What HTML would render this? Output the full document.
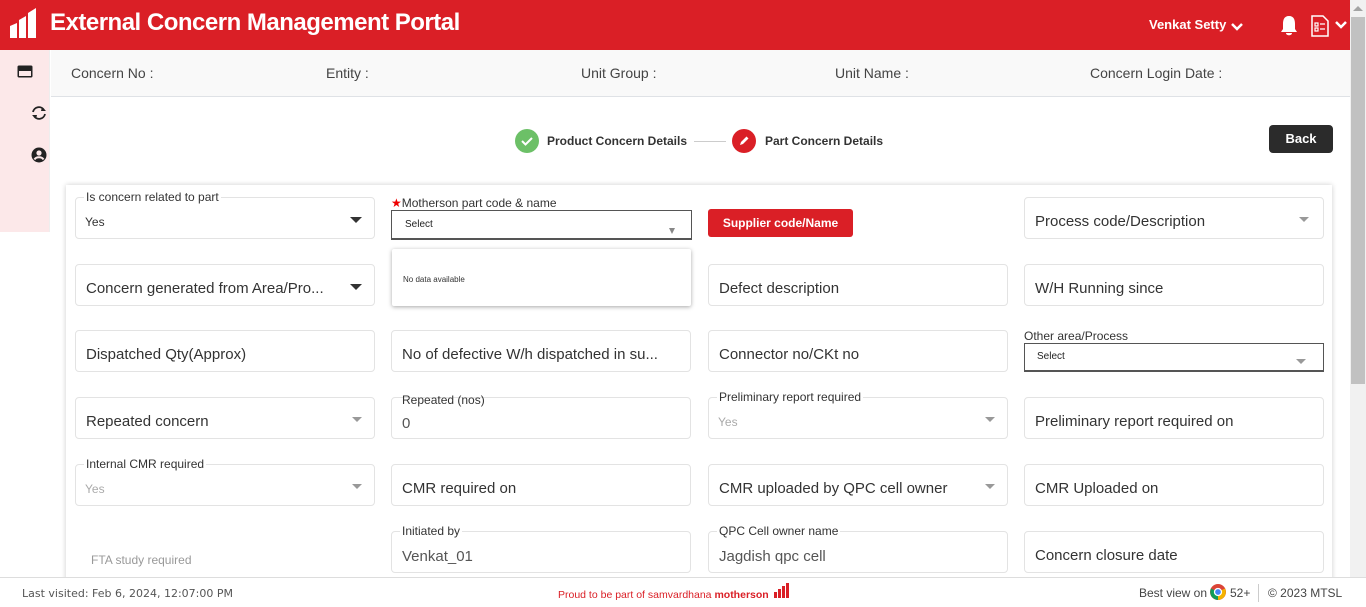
<!DOCTYPE html>
<html><head><style>
*{box-sizing:border-box;margin:0;padding:0}
body{width:1366px;height:607px;overflow:hidden;font-family:"Liberation Sans",sans-serif;background:#fff;position:relative;color:#222}
.a{position:absolute}
.f{position:absolute;width:300px;height:42px;border:1px solid #e3e3e3;border-radius:4px;background:#fff}
.ph{position:absolute;left:10px;top:15px;font-size:15px;color:#333;white-space:nowrap}
.lg{position:absolute;left:8px;top:-7px;background:#fff;padding:0 2px;font-size:12px;color:#333;line-height:13px}
.val{position:absolute;left:9px;top:17px;font-size:12px;color:#333}
.dis{color:#aaa}
.tri{position:absolute;right:12px;top:19px;width:0;height:0;border-left:6px solid transparent;border-right:6px solid transparent;border-top:6px solid #333}
.tri.g{border-top-color:#999}
</style></head><body>
<div class="a" style="left:0;top:0;width:1350px;height:50px;background:#da1f26"></div>
<svg class="a" style="left:9px;top:8px" width="28" height="30" viewBox="0 0 28 30"><path d="M1 18 L8 15 V30 H1Z M10 12 L17 8 V30 H10Z M19 5 L27 0 V30 H19Z" fill="#fff"/></svg>
<div class="a" style="left:50px;top:9px;color:#fff;font-size:24px;font-weight:bold;letter-spacing:-0.5px">External Concern Management Portal</div>
<div class="a" style="left:1149px;top:17px;color:#fff;font-size:13px;font-weight:bold">Venkat Setty</div>
<svg class="a" style="left:1230px;top:22px" width="14" height="10"><path d="M2 2 L7 7 L12 2" stroke="#fff" stroke-width="2.5" fill="none"/></svg>
<svg class="a" style="left:1280px;top:15px" width="18" height="22" viewBox="0 0 18 22"><path d="M9 1 C4 1 3 5 3 9 V14 L1 17 H17 L15 14 V9 C15 5 14 1 9 1Z M6 18 H12 C12 21 6 21 6 18Z" fill="#fff"/></svg>
<svg class="a" style="left:1311px;top:15px" width="18" height="22" viewBox="0 0 18 22"><path d="M1 1 H12 L17 6 V21 H1Z" stroke="#fff" stroke-width="1.5" fill="none"/><path d="M4 8 h3 v3 h-3z M4 13 h3 v3 h-3z M9 9 h5 M9 14 h5" stroke="#fff" stroke-width="1.2" fill="none"/></svg>
<svg class="a" style="left:1334px;top:20px" width="14" height="10"><path d="M2 2 L7 7 L12 2" stroke="#fff" stroke-width="2.5" fill="none"/></svg>
<div class="a" style="left:1350px;top:0;width:16px;height:577px;background:#f1f1f1"></div>
<div class="a" style="left:1351px;top:17px;width:14px;height:367px;background:#c1c1c1"></div>
<div class="a" style="left:1353px;top:6px;width:0;height:0;border-left:5px solid transparent;border-right:5px solid transparent;border-bottom:5px solid #a3a3a3"></div>
<div class="a" style="left:0;top:50px;width:50px;height:182px;background:#fce8e9;border-right:1px solid #eee"></div>
<svg class="a" style="left:17px;top:65px" width="16" height="13"><rect x="0.5" y="0.5" width="15" height="12" rx="1.5" fill="#222"/><rect x="2" y="6" width="12" height="5" fill="#fce8e9"/></svg>
<svg class="a" style="left:30px;top:105px" width="18" height="16" viewBox="0 0 18 16"><path d="M3 7 A6 6 0 0 1 14 5 M15 9 A6 6 0 0 1 4 11" stroke="#222" stroke-width="1.8" fill="none"/><path d="M12 2 L16 6 L11 6Z M6 14 L2 10 L7 10Z" fill="#222"/></svg>
<svg class="a" style="left:31px;top:147px" width="16" height="16" viewBox="0 0 16 16"><circle cx="8" cy="8" r="7.5" fill="#222"/><circle cx="8" cy="6" r="2.6" fill="#fce8e9"/><path d="M3.5 12.5 C5 9.5 11 9.5 12.5 12.5" stroke="#fce8e9" stroke-width="2" fill="none"/></svg>
<div class="a" style="left:51px;top:50px;width:1299px;height:47px;background:#f9f9f9;border-bottom:1px solid #dfe2e6"></div>
<div class="a" style="top:65px;left:71px;font-size:14px;color:#444">Concern No :</div>
<div class="a" style="top:65px;left:326px;font-size:14px;color:#444">Entity :</div>
<div class="a" style="top:65px;left:581px;font-size:14px;color:#444">Unit Group :</div>
<div class="a" style="top:65px;left:835px;font-size:14px;color:#444">Unit Name :</div>
<div class="a" style="top:65px;left:1090px;font-size:14px;color:#444">Concern Login Date :</div>
<svg class="a" style="left:515px;top:129px" width="24" height="24"><circle cx="12" cy="12" r="12" fill="#6cc067"/><path d="M7 12 L10.5 15.5 L17 9" stroke="#fff" stroke-width="2" fill="none"/></svg>
<div class="a" style="left:547px;top:134px;font-size:12px;font-weight:bold;color:#333">Product Concern Details</div>
<div class="a" style="left:694px;top:141px;width:32px;height:1px;background:#ccc"></div>
<svg class="a" style="left:732px;top:129px" width="24" height="24"><circle cx="12" cy="12" r="12" fill="#da1f26"/><path d="M8 16 L9 13 L14.5 7.5 L16.5 9.5 L11 15Z" fill="#fff"/></svg>
<div class="a" style="left:765px;top:134px;font-size:12px;font-weight:bold;color:#333">Part Concern Details</div>
<div class="a" style="left:1269px;top:125px;width:64px;height:28px;background:#2b2b2b;border-radius:4px;color:#fff;font-size:13px;font-weight:bold;text-align:center;line-height:28px">Back</div>
<div class="a" style="left:66px;top:185px;width:1266px;height:400px;background:#fff;box-shadow:0 0 5px rgba(0,0,0,0.2)"></div>

<div class="f" style="left:75px;top:197px"><span class="lg">Is concern related to part</span><span class="val">Yes</span><i class="tri"></i></div>
<div class="a" style="left:391px;top:196px;font-size:12px;color:#333"><span style="color:#e00">★</span>Motherson part code &amp; name</div>
<div class="a" style="left:391px;top:210px;width:301px;height:30px;border:1px solid #555;border-bottom-width:2px"><span class="a" style="left:13px;top:8px;font-size:10px">Select</span><i class="a" style="right:16px;top:17px;border-left:3px solid transparent;border-right:3px solid transparent;border-top:6px solid #888"></i></div>
<div class="a" style="left:708px;top:209px;width:145px;height:28px;background:#da1f26;border-radius:3px;color:#fff;font-size:12px;font-weight:bold;text-align:center;line-height:28px">Supplier code/Name</div>
<div class="f" style="left:1024px;top:197px"><span class="ph">Process code/Description</span><i class="tri g" style="border-width:5px 5px 0;right:14px"></i></div>

<div class="f" style="left:75px;top:264px"><span class="ph">Concern generated from Area/Pro...</span><i class="tri"></i></div>
<div class="a" style="left:392px;top:249px;width:299px;height:57px;background:#fff;box-shadow:0 1px 4px rgba(0,0,0,0.35);border-radius:2px"><span class="a" style="left:11px;top:26px;font-size:8px;color:#333">No data available</span></div>
<div class="f" style="left:708px;top:264px"><span class="ph">Defect description</span></div>
<div class="f" style="left:1024px;top:264px"><span class="ph">W/H Running since</span></div>

<div class="f" style="left:75px;top:330px"><span class="ph">Dispatched Qty(Approx)</span></div>
<div class="f" style="left:391px;top:330px"><span class="ph">No of defective W/h dispatched in su...</span></div>
<div class="f" style="left:708px;top:330px"><span class="ph">Connector no/CKt no</span></div>
<div class="a" style="left:1024px;top:329px;font-size:12px;color:#333">Other area/Process</div>
<div class="a" style="left:1024px;top:343px;width:300px;height:29px;border:1px solid #555;border-bottom-width:2px"><span class="a" style="left:12px;top:7px;font-size:10px">Select</span><i class="a" style="right:17px;top:15px;border-left:5px solid transparent;border-right:5px solid transparent;border-top:5px solid #999"></i></div>

<div class="f" style="left:75px;top:397px"><span class="ph">Repeated concern</span><i class="tri g" style="border-width:5px 5px 0"></i></div>
<div class="f" style="left:391px;top:397px"><span class="lg" style="top:-4px;background:none">Repeated (nos)</span><span class="ph" style="top:17px;color:#555">0</span></div>
<div class="f" style="left:708px;top:397px"><span class="lg">Preliminary report required</span><span class="val dis">Yes</span><i class="tri g" style="border-width:5px 5px 0"></i></div>
<div class="f" style="left:1024px;top:397px"><span class="ph">Preliminary report required on</span></div>

<div class="f" style="left:75px;top:464px"><span class="lg">Internal CMR required</span><span class="val dis">Yes</span><i class="tri g" style="border-width:5px 5px 0"></i></div>
<div class="f" style="left:391px;top:464px"><span class="ph">CMR required on</span></div>
<div class="f" style="left:708px;top:464px"><span class="ph">CMR uploaded by QPC cell owner</span><i class="tri g" style="border-width:5px 5px 0"></i></div>
<div class="f" style="left:1024px;top:464px"><span class="ph">CMR Uploaded on</span></div>

<div class="a" style="left:91px;top:553px;font-size:12px;color:#999">FTA study required</div>
<div class="f" style="left:391px;top:531px"><span class="lg">Initiated by</span><span class="ph" style="top:16px;color:#555">Venkat_01</span></div>
<div class="f" style="left:708px;top:531px"><span class="lg">QPC Cell owner name</span><span class="ph" style="top:16px;color:#555">Jagdish qpc cell</span></div>
<div class="f" style="left:1024px;top:531px"><span class="ph">Concern closure date</span></div>

<div class="a" style="left:0;top:577px;width:1366px;height:30px;background:#fff;border-top:1px solid #ddd"></div>
<div class="a" style="left:22px;top:587px;font-size:11px;color:#555;font-family:'DejaVu Sans',sans-serif">Last visited: Feb 6, 2024, 12:07:00 PM</div>
<div class="a" style="left:558px;top:589px;font-size:10.5px;color:#da1f26">Proud to be part of samvardhana <b>motherson</b></div>
<svg class="a" style="left:773px;top:583px" width="16" height="15"><path d="M1 9 h3 v6 h-3z M5 6 h3 v9 h-3z M9 3 h3 v12 h-3z M13 0 h3 v15 h-3z" fill="#da1f26"/></svg>
<div class="a" style="left:1139px;top:586px;font-size:12px;color:#444">Best view on</div>
<svg class="a" style="left:1210px;top:584px" width="16" height="16" viewBox="0 0 16 16"><circle cx="8" cy="8" r="8" fill="#db4437"/><path d="M8 8 L1 4.5 A8 8 0 0 0 8 16Z" fill="#0f9d58"/><path d="M8 8 L15 4.5 A8 8 0 0 1 8 16Z" fill="#f4b400"/><circle cx="8" cy="8" r="3.5" fill="#4285f4" stroke="#fff" stroke-width="1.3"/></svg>
<div class="a" style="left:1230px;top:586px;font-size:12px;color:#444">52+</div>
<div class="a" style="left:1258px;top:584px;width:1px;height:18px;background:#ccc"></div>
<div class="a" style="left:1268px;top:586px;font-size:12px;color:#444">© 2023 MTSL</div>
</body></html>
